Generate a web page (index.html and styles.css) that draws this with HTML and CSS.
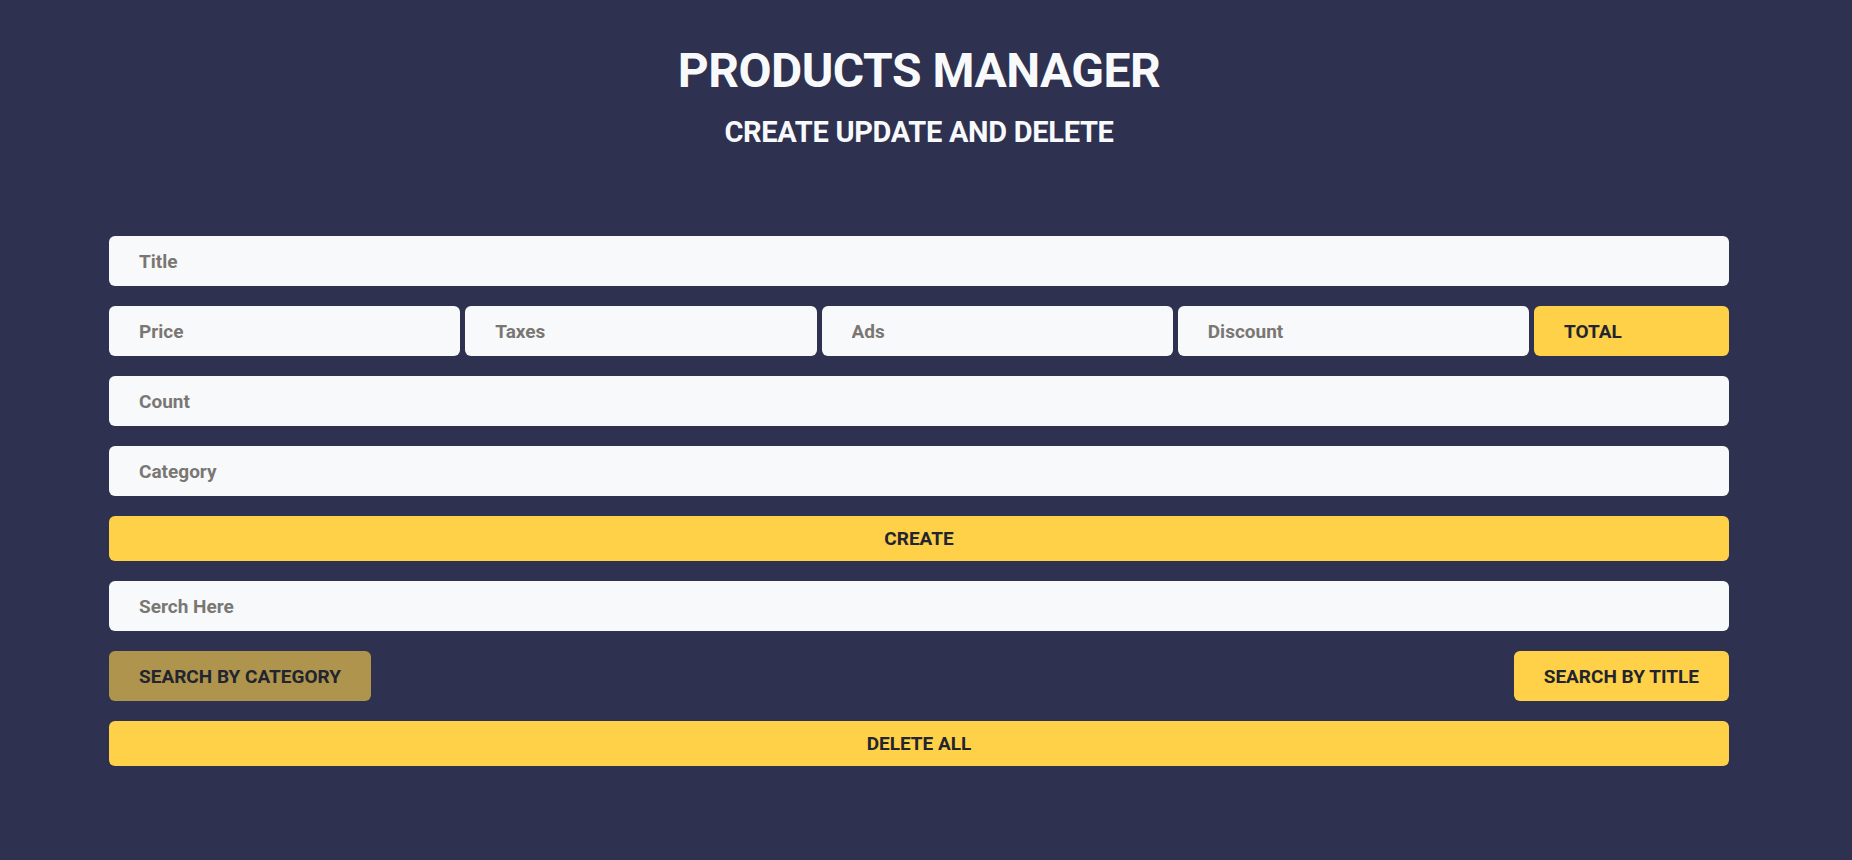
FILE: index.html
```html
<!DOCTYPE html>
<html lang="en">
<head>
<meta charset="utf-8">
<title>Products Manager</title>
<link rel="stylesheet" href="styles.css">
</head>
<body>
<div class="crud">
  <header class="head">
    <h1 class="title">PRODUCTS MANAGER</h1>
    <p class="subtitle">CREATE UPDATE AND DELETE</p>
  </header>
  <div class="form">
    <input class="field" type="text" placeholder="Title">
    <div class="price-row">
      <input class="field cell" type="number" placeholder="Price">
      <input class="field cell" type="number" placeholder="Taxes">
      <input class="field cell" type="number" placeholder="Ads">
      <input class="field cell" type="number" placeholder="Discount">
      <div class="total">TOTAL</div>
    </div>
    <input class="field" type="number" placeholder="Count">
    <input class="field" type="text" placeholder="Category">
    <button class="btn wide">CREATE</button>
    <input class="field" type="text" placeholder="Serch Here">
    <div class="search-row">
      <button class="btn pad dim">SEARCH BY CATEGORY</button>
      <button class="btn pad">SEARCH BY TITLE</button>
    </div>
    <button class="btn wide">DELETE ALL</button>
  </div>
</div>
</body>
</html>
```
FILE: styles.css
```css
* { box-sizing: border-box; }
html, body {
  margin: 0;
  padding: 0;
  background: #2e3150;
  min-height: 100%;
}
body {
  font-family: Roboto, "Liberation Sans", sans-serif;
  height: 860px;
}
.crud {
  width: 1620px;
  margin-left: 109px;
  padding-top: 43px;
}
.head {
  text-align: center;
  color: #f8f9fb;
}
.title {
  margin: 0;
  font-size: 48px;
  font-weight: 700;
  line-height: 56px;
  letter-spacing: -0.5px;
}
.subtitle {
  margin: 15px 0 0;
  font-size: 29px;
  font-weight: 700;
  line-height: 36px;
  letter-spacing: -0.3px;
}
.form {
  margin-top: 86px;
  display: flex;
  flex-direction: column;
  gap: 20px;
}
.field {
  display: block;
  width: 100%;
  height: 50px;
  border: none;
  outline: none;
  border-radius: 6px;
  background: #f8f9fb;
  padding: 0 30px;
  font-family: inherit;
  font-size: 19px;
  font-weight: 700;
  color: #333;
  -moz-appearance: textfield;
}
.field::placeholder { color: #7a7773; }
.field::-webkit-outer-spin-button,
.field::-webkit-inner-spin-button { -webkit-appearance: none; margin: 0; }
.price-row {
  display: flex;
  gap: 5px;
}
.cell { flex: 1 1 0; min-width: 0; }
.total {
  flex: 0 0 195px;
  height: 50px;
  border-radius: 6px;
  background: #ffd149;
  padding: 0 30px;
  display: flex;
  align-items: center;
  font-size: 19px;
  font-weight: 700;
  color: #22252f;
}
.btn {
  border: none;
  border-radius: 6px;
  background: #ffd149;
  color: #22252f;
  font-family: inherit;
  font-size: 19px;
  font-weight: 700;
  cursor: pointer;
}
.wide {
  width: 100%;
  height: 45px;
}
.search-row {
  display: flex;
  justify-content: space-between;
}
.pad {
  height: 50px;
  padding: 0 30px;
}
.dim { background: #ae944c; }
```
